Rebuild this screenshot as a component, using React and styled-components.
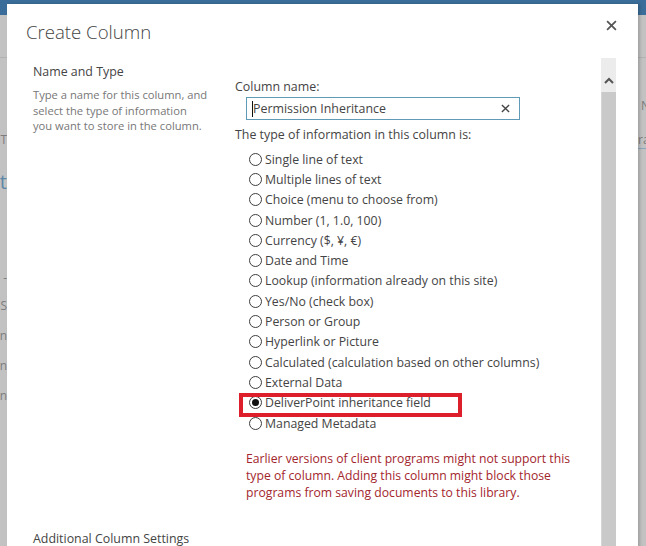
import styled, { createGlobalStyle } from 'styled-components';

const GlobalStyle = createGlobalStyle`
  html, body {
    margin: 0;
    padding: 0;
    overflow: hidden;
  }
  body {
    font-family: "Open Sans", "Liberation Sans", sans-serif;
    color: #444;
  }
`;

const Screen = styled.div`
  position: relative;
  width: 646px;
  height: 546px;
  overflow: hidden;
  background: #c2c2c2;
`;

const BehindPage = styled.div`
  display: flex;
  flex-direction: column;
  height: 100%;
`;

const SuiteBar = styled.div`
  height: 15px;
  background: #3a6d99;
`;

const BehindBody = styled.div`
  flex: 1;
  display: flex;
  justify-content: space-between;
`;

const Strip = styled.div`
  width: ${(p) => p.$width}px;
  display: flex;
  flex-direction: column;
  overflow: hidden;
  padding-top: 42px;
  align-items: ${(p) => (p.$side === 'left' ? 'flex-end' : 'flex-start')};
`;

const StripLine = styled.div`
  align-self: stretch;
  height: 1px;
  background: #b2b2b2;
`;

const Fragment = styled.span`
  margin-top: ${(p) => p.$gap}px;
  font-size: ${(p) => p.$size || 12}px;
  line-height: 16px;
  color: ${(p) => (p.$blue ? '#5d87a8' : '#7d7d7d')};
  white-space: nowrap;
  ${(p) => p.$underline && 'border-bottom: 1px solid #8aa6bd;'}
`;

const Dialog = styled.div`
  position: absolute;
  left: 7px;
  top: 4px;
  width: 631px;
  height: 560px;
  background: #fff;
  box-shadow: 2px 0 3px rgba(0, 0, 0, 0.18);
  display: flex;
  flex-direction: column;
`;

const Header = styled.div`
  height: 54px;
  display: flex;
  justify-content: space-between;
  align-items: flex-start;
  padding: 14px 20px 0 19px;
  box-sizing: border-box;
`;

const Title = styled.h1`
  margin: 0;
  font-size: 18.6px;
  font-weight: 300;
  line-height: 28px;
  color: #444;
`;

const CloseButton = styled.button`
  border: 0;
  background: none;
  padding: 0;
  margin-top: 0;
  width: 14px;
  height: 14px;
  display: flex;
  align-items: center;
  justify-content: center;
`;

const Body = styled.div`
  flex: 1;
  display: flex;
`;

const Content = styled.div`
  flex: 1;
  padding-left: 26px;
`;

const Section = styled.div`
  display: grid;
  grid-template-columns: 202px 1fr;
`;

const LeftCol = styled.div`
  padding-top: 5px;
`;

const SectionTitle = styled.div`
  font-size: 12.4px;
  line-height: 18px;
  color: #444;
`;

const Description = styled.div`
  margin-top: 6px;
  font-size: 11.2px;
  line-height: 15.5px;
  color: #777;
  width: 175px;
`;

const RightCol = styled.div`
  padding-top: 20px;
`;

const FieldLabel = styled.div`
  font-size: 12.4px;
  line-height: 18px;
  color: #444;
`;

const InputBox = styled.div`
  margin: 1px 0 0 11px;
  width: 274px;
  height: 23px;
  box-sizing: border-box;
  border: 1px solid #5f9ab7;
  display: flex;
  align-items: center;
  padding: 0 9px 0 5px;
  position: relative;
`;

const InputText = styled.span`
  flex: 1;
  font-size: 12.4px;
  color: #444;
  border-left: 1px solid #111;
  line-height: 16px;
`;

const TypeLabel = styled(FieldLabel)`
  margin-top: 6px;
`;

const RadioList = styled.div`
  margin: 5px 0 0 14px;
  display: flex;
  flex-direction: column;
`;

const RadioRow = styled.label`
  position: relative;
  height: 20.3px;
  display: flex;
  align-items: center;
  gap: 3px;
  font-size: 12.3px;
  color: #444;
  white-space: nowrap;
  ${(p) =>
    p.$highlight &&
    `
    &::after {
      content: '';
      position: absolute;
      left: -10px;
      top: 0px;
      width: 223px;
      height: 24px;
      box-sizing: border-box;
      border: 4px solid #dc1f2b;
    }
  `}
`;

const RadioCircle = styled.span`
  width: 13px;
  height: 13px;
  box-sizing: border-box;
  border: 1px solid #3d3d3d;
  border-radius: 50%;
  display: flex;
  align-items: center;
  justify-content: center;
  &::before {
    content: '';
    width: 7px;
    height: 7px;
    border-radius: 50%;
    background: ${(p) => (p.$checked ? '#111' : 'transparent')};
  }
`;

const Warning = styled.p`
  margin: 17px 0 0 11px;
  width: 345px;
  font-size: 12.2px;
  line-height: 17px;
  color: #a3262d;
`;

const NextSection = styled(SectionTitle)`
  margin-top: 29px;
`;

const Scrollbar = styled.div`
  width: 15px;
  margin-right: 22px;
  display: flex;
  flex-direction: column;
`;

const ScrollButton = styled.div`
  height: 34px;
  background: #ececec;
  display: flex;
  align-items: flex-end;
  justify-content: center;
  padding-bottom: 8px;
  box-sizing: border-box;
`;

const ScrollThumb = styled.div`
  flex: 1;
  background: #c9c9c9;
  border-left: 1px solid #d6d6d6;
`;

const types = [
  'Single line of text',
  'Multiple lines of text',
  'Choice (menu to choose from)',
  'Number (1, 1.0, 100)',
  'Currency ($, ¥, €)',
  'Date and Time',
  'Lookup (information already on this site)',
  'Yes/No (check box)',
  'Person or Group',
  'Hyperlink or Picture',
  'Calculated (calculation based on other columns)',
  'External Data',
  'DeliverPoint inheritance field',
  'Managed Metadata',
];

const selected = 'DeliverPoint inheritance field';

const Cross = ({ size, stroke, color }) => (
  <svg width={size} height={size} viewBox="0 0 10 10">
    <path d="M1 1 L9 9 M9 1 L1 9" stroke={color} strokeWidth={stroke} fill="none" />
  </svg>
);

const App = () => {
  return (
    <>
      <GlobalStyle />
      <Screen>
        <BehindPage>
          <SuiteBar />
          <BehindBody>
            <Strip $width={7} $side="left">
              <StripLine />
              <Fragment $gap={74}>T</Fragment>
              <Fragment $gap={26} $size={20} $blue>
                t
              </Fragment>
              <Fragment $gap={80}>-</Fragment>
              <Fragment $gap={12}>S</Fragment>
              <Fragment $gap={14}>n</Fragment>
              <Fragment $gap={14}>n</Fragment>
              <Fragment $gap={14}>n</Fragment>
            </Strip>
            <Strip $width={8} $side="right">
              <StripLine />
              <Fragment $gap={40}>&nbsp;N</Fragment>
              <Fragment $gap={18} $underline>
                ra
              </Fragment>
            </Strip>
          </BehindBody>
        </BehindPage>

        <Dialog>
          <Header>
            <Title>Create Column</Title>
            <CloseButton>
              <Cross size={11} stroke={1.6} color="#555" />
            </CloseButton>
          </Header>
          <Body>
            <Content>
              <Section>
                <LeftCol>
                  <SectionTitle>Name and Type</SectionTitle>
                  <Description>
                    Type a name for this column, and select the type of information you want to
                    store in the column.
                  </Description>
                </LeftCol>
                <RightCol>
                  <FieldLabel>Column name:</FieldLabel>
                  <InputBox>
                    <InputText>Permission Inheritance</InputText>
                    <Cross size={9} stroke={1.5} color="#444" />
                  </InputBox>
                  <TypeLabel>The type of information in this column is:</TypeLabel>
                  <RadioList>
                    {types.map((t) => (
                      <RadioRow key={t} $highlight={t === selected}>
                        <RadioCircle $checked={t === selected} />
                        {t}
                      </RadioRow>
                    ))}
                  </RadioList>
                  <Warning>
                    Earlier versions of client programs might not support this type of column.
                    Adding this column might block those programs from saving documents to this
                    library.
                  </Warning>
                </RightCol>
              </Section>
              <NextSection>Additional Column Settings</NextSection>
            </Content>
            <Scrollbar>
              <ScrollButton>
                <svg width="10" height="7" viewBox="0 0 10 7">
                  <path d="M1 6 L5 2 L9 6" stroke="#555" strokeWidth="2" fill="none" />
                </svg>
              </ScrollButton>
              <ScrollThumb />
            </Scrollbar>
          </Body>
        </Dialog>
      </Screen>
    </>
  );
};

export default App;
